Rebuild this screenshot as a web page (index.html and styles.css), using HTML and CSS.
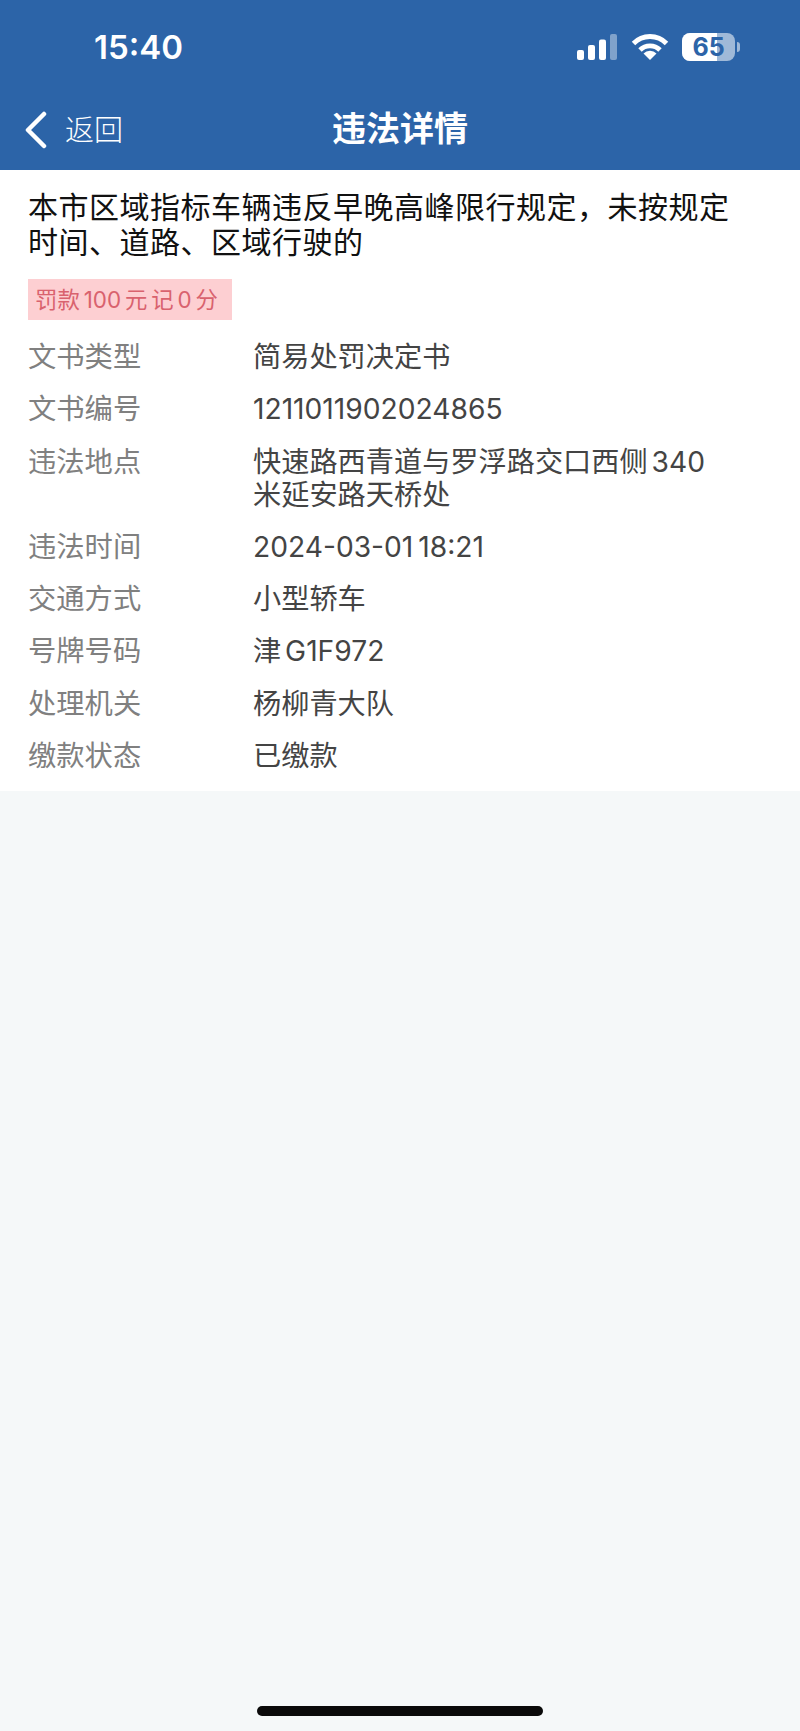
FILE: index.html
```html
<!DOCTYPE html>
<html lang="zh-CN">
<head>
    <meta charset="UTF-8">
    <meta name="viewport" content="width=device-width, initial-scale=1.0">
    <title>违法详情</title>
    <link rel="stylesheet" href="styles.css">
</head>

<body>
    <div class="page">
        <header class="header">
            <div class="status-bar">
                <span class="time">15:40</span>
                <div class="status-icons">
                    <svg class="signal" width="42" height="28" viewBox="0 0 42 28">
                        <rect x="1" y="17" width="7" height="10" rx="2" fill="#fff"/>
                        <rect x="12" y="12" width="7" height="15" rx="2" fill="#fff"/>
                        <rect x="23" y="6.500" width="7" height="20.500" rx="2" fill="#fff"/>
                        <rect x="34" y="1" width="7" height="26" rx="2" fill="#fff" fill-opacity="0.4"/>
                    </svg>
                    <svg class="wifi" width="38" height="28" viewBox="0 0 38 28">
                        <path d="M2.500 10.500 A23 23 0 0 1 35.500 10.500" fill="none" stroke="#fff" stroke-width="4.800"/>
                        <path d="M9 17 A14 14 0 0 1 29 17" fill="none" stroke="#fff" stroke-width="4.800"/>
                        <path d="M19 27 L12.500 20.500 A9 9 0 0 1 25.500 20.500 Z" fill="#fff"/>
                    </svg>
                    <div class="battery">
                        <div class="battery-body">
                            <div class="battery-fill"></div>
                            <span class="battery-num">65</span>
                        </div>
                        <div class="battery-cap"></div>
                    </div>
                </div>
            </div>
            <nav class="nav-bar">
                <div class="back">
                    <svg width="24" height="38" viewBox="0 0 24 38">
                        <path d="M20 3 L4 19 L20 35" fill="none" stroke="#fff" stroke-width="4.500" stroke-linecap="round" stroke-linejoin="round"/>
                    </svg>
                    <span>返回</span>
                </div>
                <h1 class="nav-title">违法详情</h1>
            </nav>
        </header>

        <main class="detail">
            <h2 class="reason">本市区域指标车辆违反早晚高峰限行规定，未按规定时间、道路、区域行驶的</h2>
            <div class="penalty">罚款 100 元 记 0 分</div>
            <div class="info-row">
                <div class="info-label">文书类型</div>
                <div class="info-value">简易处罚决定书</div>
            </div>
            <div class="info-row">
                <div class="info-label">文书编号</div>
                <div class="info-value">1211011902024865</div>
            </div>
            <div class="info-row">
                <div class="info-label">违法地点</div>
                <div class="info-value">快速路西青道与罗浮路交口西侧 340 米延安路天桥处</div>
            </div>
            <div class="info-row">
                <div class="info-label">违法时间</div>
                <div class="info-value info-date">2024-03-01 18:21</div>
            </div>
            <div class="info-row">
                <div class="info-label">交通方式</div>
                <div class="info-value">小型轿车</div>
            </div>
            <div class="info-row">
                <div class="info-label">号牌号码</div>
                <div class="info-value">津 G1F972</div>
            </div>
            <div class="info-row">
                <div class="info-label">处理机关</div>
                <div class="info-value">杨柳青大队</div>
            </div>
            <div class="info-row">
                <div class="info-label">缴款状态</div>
                <div class="info-value">已缴款</div>
            </div>
        </main>

        <div class="home-indicator"></div>
    </div>
</body>
</html>
```

FILE: styles.css
```css
* {
    box-sizing: border-box;
}

body {
    margin: 0;
    font-family: Inter, "Noto Sans CJK SC", sans-serif;
    background: #f5f8f9;
    color: #444;
}

.page {
    height: 1731px;
    display: flex;
    flex-direction: column;
}

.header {
    height: 170px;
    background: #2c64a8;
    color: white;
}

.status-bar {
    height: 94px;
    display: flex;
    align-items: center;
    justify-content: space-between;
    padding-left: 94px;
    padding-right: 60px;
}

.time {
    font-size: 33px;
    font-weight: 600;
}

.status-icons {
    display: flex;
    align-items: center;
}

.signal {
    margin-right: 13px;
}

.wifi {
    margin-right: 13px;
}

.battery {
    display: flex;
    align-items: center;
}

.battery-body {
    position: relative;
    width: 53px;
    height: 28px;
    border-radius: 8px;
    overflow: hidden;
    background: rgba(255, 255, 255, 0.55);
    display: flex;
    align-items: center;
    justify-content: center;
}

.battery-fill {
    position: absolute;
    left: 0;
    top: 0;
    bottom: 0;
    width: 35px;
    background: white;
}

.battery-num {
    position: relative;
    font-size: 25px;
    font-weight: 700;
    color: #2c64a8;
}

.battery-cap {
    width: 3px;
    height: 10px;
    margin-left: 2px;
    border-radius: 0 3px 3px 0;
    background: rgba(255, 255, 255, 0.55);
}

.nav-bar {
    position: relative;
    height: 76px;
    padding-bottom: 11px;
    display: flex;
    align-items: center;
    justify-content: center;
}

.back {
    position: absolute;
    left: 24px;
    top: 16px;
    display: flex;
    align-items: center;
    font-size: 29px;
}

.back span {
    margin-left: 17px;
    margin-top: -3px;
    font-weight: 300;
}

.nav-title {
    margin: 0;
    font-size: 34px;
    font-weight: 600;
}

.detail {
    background: white;
    height: 621px;
    padding: 20px 28px 0;
}

.reason {
    margin: 0;
    width: 710px;
    font-size: 30px;
    font-weight: 400;
    line-height: 35px;
    letter-spacing: 0.5px;
    color: #111;
}

.penalty {
    display: inline-block;
    height: 41px;
    margin-top: 19px;
    margin-bottom: 12px;
    padding: 0 14px 0 7px;
    font-size: 22.400px;
    line-height: 41px;
    word-spacing: -2.400px;
    color: #d9626e;
    background: #fdcfd2;
}

.info-row {
    display: flex;
    padding: 9px 0 10.3px;
}

.info-label {
    width: 225px;
    flex-shrink: 0;
    font-size: 28.300px;
    line-height: 33px;
    color: #808080;
}

.info-value {
    font-size: 28.200px;
    line-height: 33px;
    width: 476px;
    word-spacing: -4px;
}

.info-date {
    word-spacing: -3px;
}

.home-indicator {
    width: 286px;
    height: 10px;
    margin: auto auto 15px;
    border-radius: 5px;
    background: #0a0a0a;
}
```
